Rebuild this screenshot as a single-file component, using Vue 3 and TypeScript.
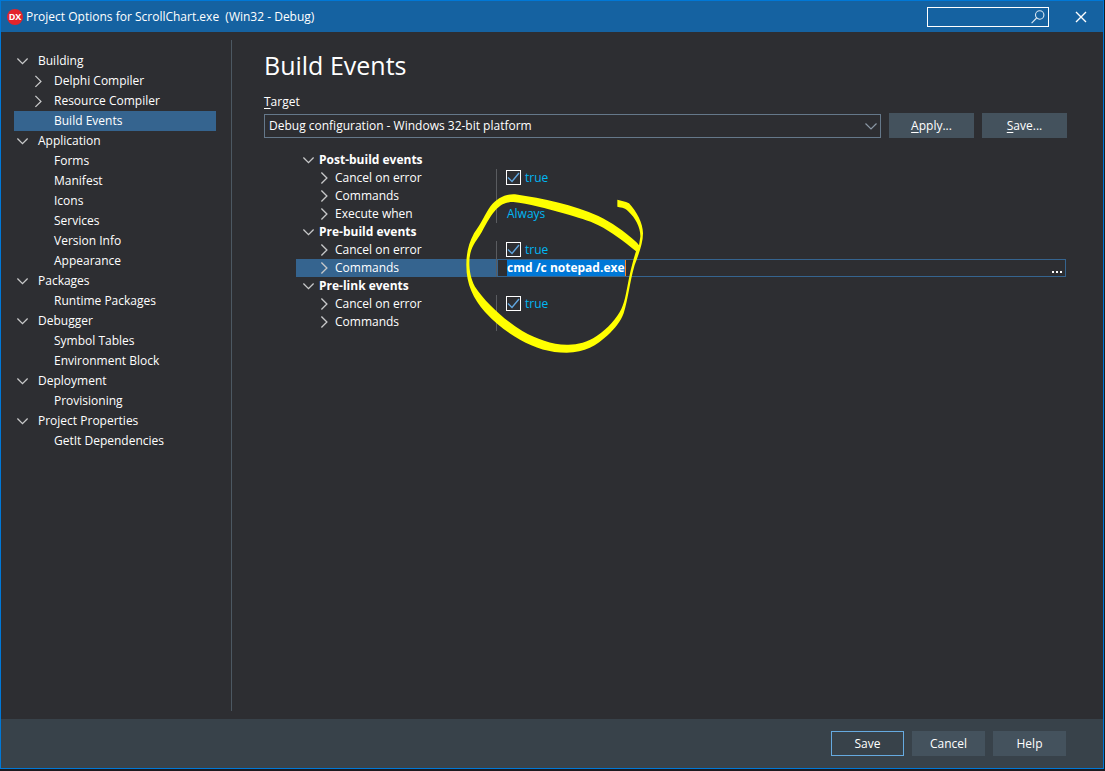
<script setup lang="ts">
import { ref } from 'vue'

interface TreeNode {
  label: string
  level: 0 | 1
  open?: boolean
  expandable?: boolean
}

interface Prop {
  name: string
  kind: 'check' | 'text' | 'edit' | 'none'
  value?: string
}

interface Group {
  title: string
  props: Prop[]
}

const nodes: TreeNode[] = [
  { label: 'Building', level: 0, expandable: true, open: true },
  { label: 'Delphi Compiler', level: 1, expandable: true },
  { label: 'Resource Compiler', level: 1, expandable: true },
  { label: 'Build Events', level: 1 },
  { label: 'Application', level: 0, expandable: true, open: true },
  { label: 'Forms', level: 1 },
  { label: 'Manifest', level: 1 },
  { label: 'Icons', level: 1 },
  { label: 'Services', level: 1 },
  { label: 'Version Info', level: 1 },
  { label: 'Appearance', level: 1 },
  { label: 'Packages', level: 0, expandable: true, open: true },
  { label: 'Runtime Packages', level: 1 },
  { label: 'Debugger', level: 0, expandable: true, open: true },
  { label: 'Symbol Tables', level: 1 },
  { label: 'Environment Block', level: 1 },
  { label: 'Deployment', level: 0, expandable: true, open: true },
  { label: 'Provisioning', level: 1 },
  { label: 'Project Properties', level: 0, expandable: true, open: true },
  { label: 'GetIt Dependencies', level: 1 },
]

const selected = ref('Build Events')
const command = ref('cmd /c notepad.exe')
const target = ref('Debug configuration - Windows 32-bit platform')

const groups: Group[] = [
  {
    title: 'Post-build events',
    props: [
      { name: 'Cancel on error', kind: 'check' },
      { name: 'Commands', kind: 'none' },
      { name: 'Execute when', kind: 'text', value: 'Always' },
    ],
  },
  {
    title: 'Pre-build events',
    props: [
      { name: 'Cancel on error', kind: 'check' },
      { name: 'Commands', kind: 'edit' },
    ],
  },
  {
    title: 'Pre-link events',
    props: [
      { name: 'Cancel on error', kind: 'check' },
      { name: 'Commands', kind: 'none' },
    ],
  },
]
</script>

<template>
  <div class="screen">
    <div class="window">
      <header class="titlebar">
        <svg class="logo" viewBox="0 0 16 16" aria-hidden="true">
          <circle cx="8" cy="8" r="8" fill="#e3242b" />
          <text x="8" y="11" text-anchor="middle" class="logo-text">DX</text>
        </svg>
        <span class="caption">Project Options for ScrollChart.exe&nbsp; (Win32 - Debug)</span>
        <div class="search">
          <input type="text" class="search-input" aria-label="Search" />
          <svg class="search-icon" viewBox="0 0 14 14" aria-hidden="true">
            <circle cx="8.7" cy="5" r="4.2" />
            <path d="M5.6 8 L0.6 13.2" />
          </svg>
        </div>
        <button type="button" class="close" aria-label="Close">
          <svg viewBox="0 0 12 12" aria-hidden="true"><path d="M1 1 L11 11 M11 1 L1 11" /></svg>
        </button>
      </header>

      <div class="content">
        <nav class="tree">
          <button
            v-for="node in nodes"
            :key="node.label"
            type="button"
            class="node"
            :class="{ child: node.level === 1, active: node.label === selected }"
            @click="selected = node.label"
          >
            <svg class="chevron" viewBox="0 0 12 12" aria-hidden="true">
              <path v-if="node.open" d="M0.4 3.5 L5.5 8.6 L10.6 3.5" />
              <path v-else-if="node.expandable" d="M2.4 0.9 L7.9 6.4 L2.4 11.9" />
            </svg>
            <span>{{ node.label }}</span>
          </button>
        </nav>

        <main class="main">
          <h1>Build Events</h1>
          <label for="target" class="target-label"><u>T</u>arget</label>
          <div class="target-row">
            <div class="combo">
              <select id="target" v-model="target">
                <option>Debug configuration - Windows 32-bit platform</option>
              </select>
              <svg class="combo-arrow" viewBox="0 0 12 12" aria-hidden="true"><path d="M0.5 3.5 L6 9 L11.5 3.5" /></svg>
            </div>
            <button type="button" class="btn wide"><span><u>A</u>pply...</span></button>
            <button type="button" class="btn wide"><span><u>S</u>ave...</span></button>
          </div>

          <table class="grid">
            <colgroup>
              <col class="name-col" />
              <col />
            </colgroup>
            <tbody v-for="group in groups" :key="group.title">
              <tr>
                <th colspan="2" class="group">
                  <div class="cell">
                    <svg class="chevron" viewBox="0 0 12 12" aria-hidden="true"><path d="M0.4 3.5 L5.5 8.6 L10.6 3.5" /></svg>
                    <span>{{ group.title }}</span>
                  </div>
                </th>
              </tr>
              <tr v-for="prop in group.props" :key="prop.name" :class="{ current: prop.kind === 'edit' }">
                <th class="name">
                  <div class="cell">
                    <svg class="chevron" viewBox="0 0 12 12" aria-hidden="true"><path d="M2.4 0.5 L7.9 6 L2.4 11.5" /></svg>
                    <span>{{ prop.name }}</span>
                  </div>
                </th>
                <td class="value">
                  <label v-if="prop.kind === 'check'" class="check">
                    <span class="box">
                      <input type="checkbox" checked />
                      <svg viewBox="0 0 15 15" aria-hidden="true"><path d="M2 7.5 L6 11.5 L13 3" /></svg>
                    </span>
                    <span>true</span>
                  </label>
                  <span v-else-if="prop.kind === 'text'" class="plain">{{ prop.value }}</span>
                  <div v-else-if="prop.kind === 'edit'" class="editor">
                    <input v-model="command" type="text" class="command" aria-label="Commands" />
                    <button type="button" class="more" aria-label="Edit commands">
                      <svg viewBox="0 0 10 2" aria-hidden="true">
                        <path d="M0 0h2v2h-2z M4 0h2v2h-2z M8 0h2v2h-2z" />
                      </svg>
                    </button>
                  </div>
                </td>
              </tr>
            </tbody>
          </table>
        </main>
      </div>

      <footer class="footer">
        <button type="button" class="btn primary">Save</button>
        <button type="button" class="btn">Cancel</button>
        <button type="button" class="btn">Help</button>
      </footer>
    </div>

    <svg class="marker" viewBox="0 0 570 510" aria-hidden="true">
      <path
        d="M531 158 C490 122 455 97 415 78 C340 45 250 25 165 13 C135 11 110 26 92 48 C75 72 64 100 42 130 C25 162 19 190 19 225 C19 285 40 325 75 366 C110 403 140 427 180 449 C225 474 270 488 320 488 C375 488 410 466 443 436 C465 415 482 395 491 370 C505 325 508 280 524 225 C537 190 549 160 549 130 C549 100 530 65 507 40 C495 33 484 33 472 29 L472 50 C488 54 496 53 506 65 C526 84 542 112 541 140 L537 166 L531 158 Z
           M528 184 C521 205 514 232 509 255 C499 300 497 330 484 357 C470 385 445 415 410 438 C380 458 350 465 320 464 C275 464 230 447 187 423 C130 388 75 335 45 290 C32 265 28 240 28 218 C28 180 43 160 60 135 C75 110 88 80 105 62 C122 42 138 36 160 36 C205 40 260 56 310 70 C355 83 385 91 415 106 C455 126 490 153 528 184 Z"
        fill-rule="evenodd"
      />
    </svg>
  </div>
</template>

<style>
body {
  background: #1c1b20;
}
</style>

<style scoped>
.screen {
  position: relative;
  box-sizing: border-box;
  min-height: 100vh;
  padding: 0 1px 2px 0;
  display: flex;
  background: #1c1b20;
  color: #fff;
  font-family: 'Open Sans', 'Noto Sans', sans-serif;
  font-size: 12px;
  line-height: 18px;
}

button,
input,
select {
  font: inherit;
  color: inherit;
  margin: 0;
  border-radius: 0;
  outline: none;
}

u {
  text-underline-offset: 2px;
}

svg {
  display: block;
  flex: none;
}

.window {
  flex: 1;
  min-width: 0;
  display: flex;
  flex-direction: column;
  border: 1px solid #0078d7;
  background: #2d2e32;
}

.titlebar {
  display: flex;
  align-items: center;
  height: 31px;
  padding-left: 6px;
  background: #1562a1;
}

.logo {
  width: 16px;
  height: 16px;
}

.logo-text {
  fill: #fff;
  font-size: 9px;
  font-weight: 700;
}

.caption {
  flex: 1;
  margin-left: 3px;
}

.search {
  display: flex;
  align-items: center;
  box-sizing: border-box;
  width: 122px;
  height: 20px;
  padding-right: 3px;
  border: 1px solid #fff;
}

.search-input {
  flex: 1;
  min-width: 0;
  height: 16px;
  padding: 0 4px;
  border: 0;
  background: transparent;
}

.search-icon {
  width: 14px;
  height: 14px;
  fill: none;
  stroke: #dbe8f3;
  stroke-width: 1.1;
}

.close {
  width: 24px;
  height: 24px;
  margin: 0 10px 0 20px;
  padding: 6px;
  border: 0;
  background: transparent;
}

.close svg {
  width: 12px;
  height: 12px;
  stroke: #fff;
  stroke-width: 1.4;
}

.content {
  flex: 1;
  display: flex;
  padding: 8px 36px 8px 13px;
}

.tree {
  box-sizing: border-box;
  width: 218px;
  padding: 11px 15px 0 0;
  border-right: 1px solid #4c5862;
}

.node {
  display: flex;
  align-items: center;
  gap: 9px;
  width: 100%;
  height: 20px;
  padding: 0 3px;
  border: 0;
  background: transparent;
  text-align: left;
}

.node.child {
  padding-left: 19px;
}

.node.active {
  background: #35648f;
}

.chevron {
  width: 12px;
  height: 12px;
  fill: none;
  stroke: #c8c9ca;
  stroke-width: 1.3;
  overflow: visible;
}

.main {
  flex: 1;
  min-width: 0;
  padding-left: 32px;
}

h1 {
  margin: 7px 0 0;
  font-size: 25px;
  line-height: 36px;
  font-weight: 400;
}

.target-label {
  display: block;
  margin-top: 10px;
}

.target-row {
  display: flex;
  align-items: center;
  gap: 8px;
  margin-top: 2px;
}

.combo {
  position: relative;
  flex: 1;
}

.combo select {
  display: block;
  appearance: none;
  box-sizing: border-box;
  width: 100%;
  height: 24px;
  padding: 0 20px 0 4px;
  border: 1px solid #65788a;
  background: #2d2e32;
}

.combo-arrow {
  position: absolute;
  top: 6px;
  right: 4px;
  width: 12px;
  height: 12px;
  fill: none;
  stroke: #8b98a5;
  stroke-width: 1.2;
  pointer-events: none;
}

.btn {
  box-sizing: border-box;
  width: 73px;
  height: 25px;
  padding: 0;
  border: 0;
  background: #44525d;
}

.btn.wide {
  width: 85px;
}

.btn.primary {
  border: 1px solid #66aae0;
  background: #38424a;
}

.grid {
  width: calc(100% - 33px);
  margin: 13px 1px 0 32px;
  border-collapse: separate;
  border-spacing: 0;
  table-layout: fixed;
}

.name-col {
  width: 200px;
}

.grid th,
.grid td {
  height: 18px;
  padding: 0;
  text-align: left;
  font-weight: 400;
  line-height: 18px;
}

.cell {
  display: flex;
  align-items: center;
  gap: 4px;
  height: 18px;
}

.grid .group {
  padding-left: 7px;
  font-weight: 700;
}

.grid .name {
  padding-left: 23px;
}

.current .name {
  background: #35648f;
}

.grid .value {
  border-left: 1px solid #5a5c60;
  color: #00b7f4;
}

.check {
  display: flex;
  align-items: center;
  gap: 4px;
  height: 18px;
  padding-left: 9px;
}

.box {
  display: grid;
  grid-template-rows: 15px;
  width: 15px;
  height: 16px;
}

.box input {
  grid-area: 1 / 1;
  appearance: none;
  box-sizing: border-box;
  width: 15px;
  height: 15px;
  border: 1px solid #fff;
}

.box svg {
  grid-area: 1 / 1;
  width: 15px;
  height: 15px;
  fill: none;
  stroke: #61a6df;
  stroke-width: 1.4;
}

.plain {
  display: block;
  padding-left: 10px;
}

.editor {
  display: flex;
  align-items: center;
  justify-content: space-between;
  box-sizing: border-box;
  height: 18px;
  padding: 0 3px 0 9px;
  border: 1px solid #35648f;
}

.command {
  field-sizing: content;
  box-sizing: content-box;
  height: 16px;
  padding: 0;
  border: 0;
  border-right: 1px solid #ff8728;
  background: #0078d7;
  color: #fff;
  font-weight: 700;
  line-height: 16px;
}

.more {
  align-self: flex-end;
  padding: 0 0 3px;
  border: 0;
  background: transparent;
}

.more svg {
  width: 10px;
  height: 2px;
  fill: #fff;
}

.footer {
  display: flex;
  align-items: center;
  justify-content: flex-end;
  gap: 8px;
  height: 49px;
  padding-right: 37px;
  background: #38424a;
}

.marker {
  position: absolute;
  left: 460px;
  top: 190px;
  width: 190px;
  height: 170px;
  fill: #ffff00;
  pointer-events: none;
}
</style>
